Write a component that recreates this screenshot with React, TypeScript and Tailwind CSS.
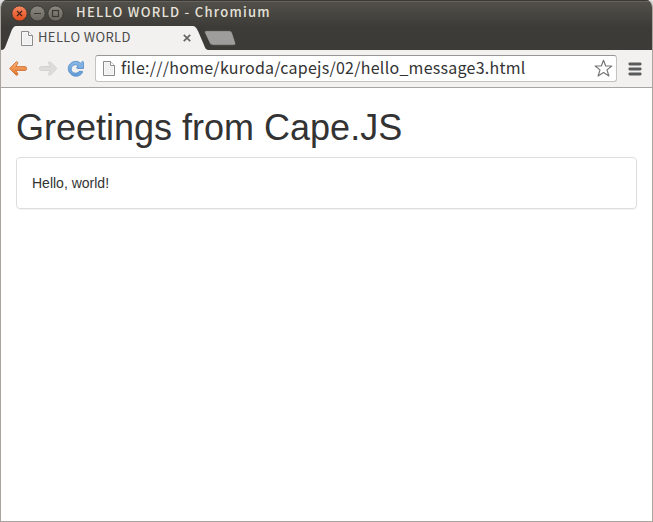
import React from 'react';

const PageIcon = () => (
  <svg width="12" height="15" viewBox="0 0 12 15" className="shrink-0">
    <path d="M.5.5H7.5L11.5 4.5V14.5H.5Z" fill="#f8f8f8" stroke="#8b8b8b" />
    <path d="M2 2H6.500V5.500H10V13H2Z" fill="#f0f0f0" />
    <path d="M7.5.5V4.5H11.5" fill="#fff" stroke="#8b8b8b" />
  </svg>
);

function TitleBar() {
  return (
    <div className="flex h-[26px] items-center pl-[10px]">
      <svg width="54" height="18" viewBox="0 0 54 18" className="shrink-0">
        <defs>
          <linearGradient id="close" x2="0" y2="1">
            <stop stopColor="#f58a63" />
            <stop offset="1" stopColor="#e24a1a" />
          </linearGradient>
          <linearGradient id="grey" x2="0" y2="1">
            <stop stopColor="#8a8880" />
            <stop offset="1" stopColor="#68665f" />
          </linearGradient>
        </defs>
        <circle cx="8.5" cy="9.5" r="7.6" fill="url(#close)" stroke="#35332e" strokeWidth=".8" />
        <circle cx="26.5" cy="9.5" r="7.6" fill="url(#grey)" stroke="#35332e" strokeWidth=".8" />
        <circle cx="44.5" cy="9.5" r="7.6" fill="url(#grey)" stroke="#35332e" strokeWidth=".8" />
        <path d="M6 7L11 12M11 7L6 12" stroke="#4a2318" strokeWidth="1.2" />
        <path d="M23 9.5H30" stroke="#393832" strokeWidth="1.2" />
        <rect x="41.5" y="6.5" width="6" height="6" fill="none" stroke="#393832" strokeWidth="1.2" />
      </svg>
      <span className="ml-[11px] whitespace-nowrap pb-[2px] font-['Noto_Sans_CJK_JP',sans-serif] text-[13px] font-medium leading-[24px] tracking-[1.27px] text-[#e6e2d9]">
        HELLO WORLD - Chromium
      </span>
    </div>
  );
}

function TabStrip() {
  return (
    <div className="flex h-6">
      <div className="relative flex h-6 w-[203px] items-center pl-5">
        <svg width="210" height="24" viewBox="0 0 210 24" className="absolute left-0 top-0">
          <path d="M0 24C3 24 4 22 5 19L10 6C12 1 13 0 16 0H191C194 0 195 1 197 5L203 19C204 22 205 24 208 24Z" fill="#f2f1f0" />
        </svg>
        <div className="relative flex items-center">
          <PageIcon />
          <span className="ml-[5px] w-[145px] whitespace-nowrap pb-[2px] font-['Noto_Sans_CJK_JP',sans-serif] text-[13px] leading-[20px] tracking-[0.38px] text-[#4c4c4c]">
            HELLO WORLD
          </span>
          <svg width="8" height="8" viewBox="0 0 8 8">
            <path d="M.8.8L7.200 7.200M7.200.8L.8 7.200" stroke="#666" strokeWidth="1.7" />
          </svg>
        </div>
      </div>
      <svg width="33" height="16" viewBox="0 0 33 16" className="mt-1">
        <path d="M2 .7H25.500Q27.500.7 28.300 3L31.600 13Q32 15.200 30 15.200H9Q6.500 15.200 5.500 13L.8 3Q0 .7 2 .7Z" fill="#9e9d9b" stroke="#37352f" strokeWidth=".6" />
      </svg>
    </div>
  );
}

function Toolbar() {
  return (
    <div className="flex h-[38px] items-center border-b border-[#a5a5a5] bg-[#f2f1f0]">
      <svg width="78" height="20" viewBox="0 0 78 20" className="ml-2 shrink-0">
        <defs>
          <linearGradient id="orange" x2="0" y2="1">
            <stop stopColor="#f9b478" />
            <stop offset="1" stopColor="#e5762c" />
          </linearGradient>
          <linearGradient id="blue" x2="0" y2="1">
            <stop stopColor="#8bb9e6" />
            <stop offset="1" stopColor="#5f9bd8" />
          </linearGradient>
        </defs>
        <path d="M.6 9.500L7 3Q8.300 2.200 8.900 3.500Q9 4.500 6.800 7.600H16Q17.600 7.600 17.600 9.500Q17.600 11.400 16 11.400H6.800Q9 14.500 8.900 15.500Q8.300 16.800 7 16Z" fill="url(#orange)" stroke="#ce7036" strokeWidth=".9" strokeLinejoin="round" />
        <path d="M47.800 9.500L41.400 3Q40.100 2.200 39.500 3.500Q39.400 4.500 41.600 7.600H32.400Q30.500 7.600 30.500 9.500Q30.500 11.400 32.400 11.400H41.600Q39.400 14.500 39.500 15.500Q40.100 16.800 41.400 16Z" fill="#dfddda" stroke="#cfcdca" strokeWidth=".9" strokeLinejoin="round" />
        <path d="M72.800 12.300Q74 12 73.500 13.500C71.500 17 67.500 18 64.300 16.700C59 14.500 57.500 8 61.500 4.500C64.500 1.600 68.800 1.800 71.500 4.200L73.300 2.500Q74.500 1.900 74.500 3.500V9.500H68.500Q67 9.400 68 8L69.200 6.700C67.500 5.400 65 5.500 63.500 7C61.500 9 62 12.500 64.500 13.700C67 14.800 69.200 13.800 70.200 12.300Z" fill="url(#blue)" stroke="#5089c5" strokeWidth=".8" strokeLinejoin="round" />
      </svg>
      <div className="ml-2 flex h-[27px] w-[522px] items-center rounded-[3px] border border-[#c3c2c1] border-t-[#969696] bg-white pl-[7px]">
        <PageIcon />
        <span className="ml-[6px] w-[473px] whitespace-nowrap pb-[2px] font-['Noto_Sans_CJK_JP',sans-serif] text-[16px] leading-[23px] tracking-[0.25px] text-[#333]">
          file:///home/kuroda/capejs/02/hello_message3.html
        </span>
        <svg width="19" height="19" viewBox="0 0 19 19" className="shrink-0">
          <path d="M9.500 1.200L11.700 7H17.800L13 10.900L14.900 17L9.500 13.500L4.100 17L6 10.900L1.200 7H7.300Z" fill="#fff" stroke="#777" strokeWidth="1.200" strokeLinejoin="round" />
        </svg>
      </div>
      <svg width="14" height="14" viewBox="0 0 14 14" className="ml-[11px] shrink-0">
        <path d="M1.800 2H12.200M1.800 7H12.200M1.800 12H12.200" stroke="#5a5a5a" strokeWidth="2.800" strokeLinecap="round" />
      </svg>
    </div>
  );
}

export default function App() {
  return (
    <div className="h-[522px] w-[653px] overflow-hidden bg-[#ddd]">
      <div className="flex h-full flex-col overflow-hidden rounded-t-[7px] border border-t-0 border-[#aaa49f] bg-white">
        <header className="h-[50px] shrink-0 bg-linear-to-b from-[#53514b] to-[#3c3b37] to-55% shadow-[inset_0_1px_0_#3b3935,inset_0_2px_0_#64625b]">
          <TitleBar />
          <TabStrip />
        </header>
        <Toolbar />
        <main className="grow px-[15px] pt-5 font-['Liberation_Sans',Arial,sans-serif] text-[#333]">
          <h1 className="mb-[9px] text-[36px] font-medium leading-[40px]">Greetings from Cape.JS</h1>
          <div className="rounded-[4px] border border-[#ddd] p-[15px] text-[14px] leading-[20px] shadow-[0_1px_1px_rgba(0,0,0,0.05)]">
            Hello, world!
          </div>
        </main>
      </div>
    </div>
  );
}
